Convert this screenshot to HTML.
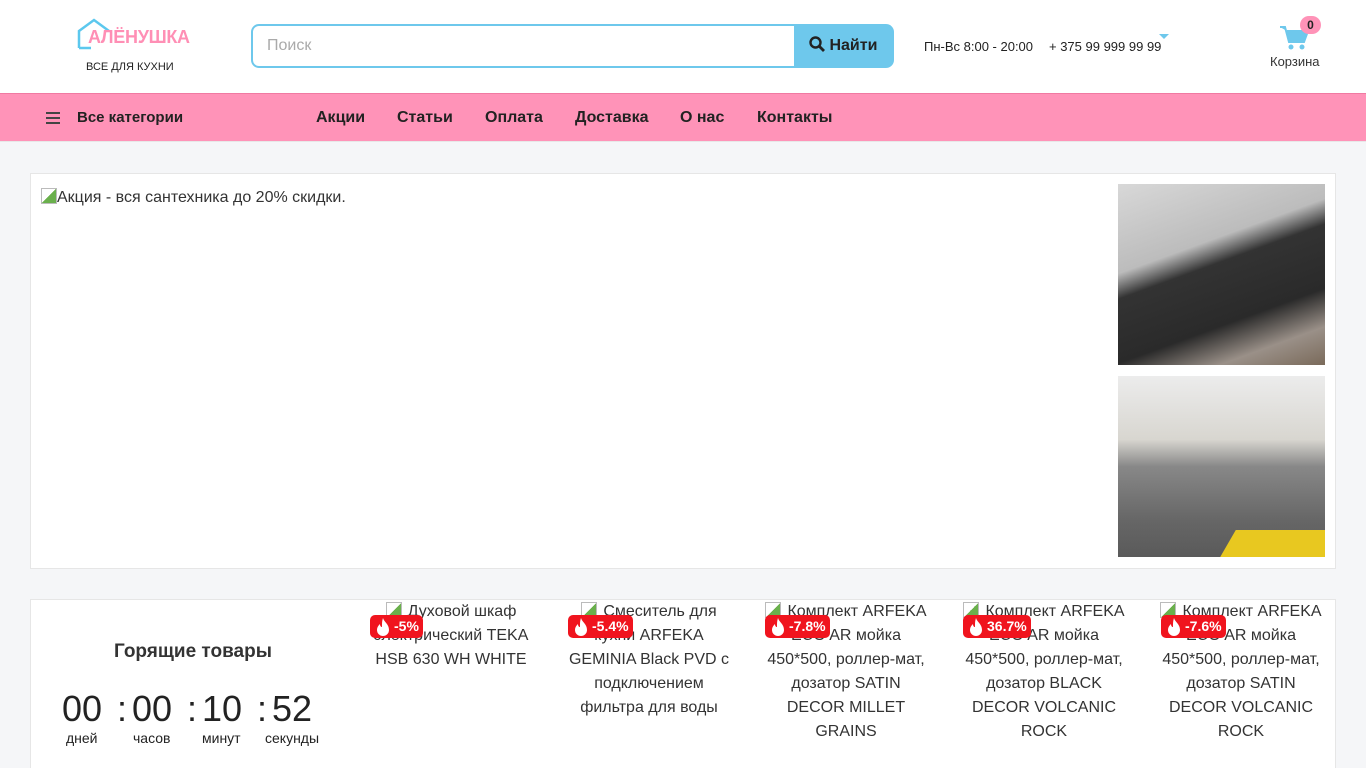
<!DOCTYPE html>
<html><head><meta charset="utf-8"><style>
*{box-sizing:border-box;margin:0;padding:0}
html,body{width:1366px;height:768px;overflow:hidden}
body{background:#f5f6f8;font-family:"Liberation Sans",sans-serif;color:#222;position:relative}
.a{position:absolute}
.hdr{left:0;top:0;width:1366px;height:93px;background:#fff}
.nav{left:0;top:93px;width:1366px;height:49px;background:#ff93b8;border-top:1px solid #f07aa2;border-bottom:1px solid #e8e8e8}
.nav span{position:absolute;top:15px;font-weight:bold;font-size:16px;color:#222}
.box{background:#fff;border:1px solid #e6e6e6}
.p{position:absolute;top:600px;width:168px;text-align:center;font-size:16px;line-height:24px;color:#333}
.p i{display:inline-block;width:16px;height:16px;margin-right:6px;vertical-align:-2px;border:1px solid #bbb;background:linear-gradient(135deg,#fff 50%,#6ab04c 50%)}
.b{position:absolute;top:615px;height:23px;background:#f0141e;color:#fff;font-weight:bold;font-size:14px;line-height:23px;border-radius:5px;padding:0 4px 0 24px}
.b svg{position:absolute;left:4px;top:2px}
.t{position:absolute;top:688px;font-size:36px;color:#222}
.l{position:absolute;top:730px;font-size:14px;color:#222;text-align:center}
</style></head><body>
<div class="a hdr"></div>
<svg class="a" style="left:76px;top:17px" width="40" height="34"><path d="M3 31V14L18 3l15 11" fill="none" stroke="#5cc8ee" stroke-width="2.5"/><path d="M3 31h12" stroke="#5cc8ee" stroke-width="2.5"/></svg>
<div class="a" style="left:88px;top:27px;font-size:18px;font-weight:bold;color:#ff8fb5;letter-spacing:-0.3px">АЛЁНУШКА</div>
<div class="a" style="left:86px;top:61px;font-size:11px;color:#222">ВСЕ ДЛЯ КУХНИ</div>
<div class="a" style="left:251px;top:24px;width:545px;height:44px;border:2px solid #6ec8ec;border-radius:8px 0 0 8px;background:#fff"></div>
<div class="a" style="left:267px;top:37px;font-size:16px;color:#aaa">Поиск</div>
<div class="a" style="left:794px;top:24px;width:100px;height:44px;background:#6ec8ec;border-radius:0 8px 8px 0;color:#222;font-weight:bold;font-size:16px;line-height:44px;padding-left:15px">
<svg width="16" height="16" style="vertical-align:-2px"><circle cx="6.5" cy="6.5" r="5" fill="none" stroke="#222" stroke-width="2.4"/><path d="M10 10l5 5" stroke="#222" stroke-width="2.8"/></svg> Найти</div>
<div class="a" style="left:924px;top:39px;font-size:13px">Пн-Вс 8:00 - 20:00</div>
<div class="a" style="left:1049px;top:39px;font-size:13px">+ 375 99 999 99 99</div>
<div class="a" style="left:1159px;top:34px;border:5px solid transparent;border-top-color:#6ec8ec"></div>
<svg class="a" style="left:1280px;top:25px" width="30" height="26"><path d="M0 2h5l4 15h15l4-11H7" fill="#6ec8ec" stroke="#6ec8ec" stroke-width="2"/><circle cx="11" cy="22" r="2.5" fill="#6ec8ec"/><circle cx="22" cy="22" r="2.5" fill="#6ec8ec"/></svg>
<div class="a" style="left:1300px;top:16px;width:21px;height:18px;border-radius:9px;background:#ff93b8;font-size:12px;font-weight:bold;text-align:center;line-height:18px">0</div>
<div class="a" style="left:1270px;top:54px;font-size:13px;color:#333">Корзина</div>
<div class="a nav">
<svg style="position:absolute;left:46px;top:18px" width="14" height="12"><path d="M0 1h14M0 6h14M0 11h14" stroke="#444" stroke-width="2"/></svg>
<span style="left:77px;font-size:15px">Все категории</span>
<span style="left:316px">Акции</span><span style="left:397px">Статьи</span><span style="left:485px">Оплата</span><span style="left:575px">Доставка</span><span style="left:680px">О нас</span><span style="left:757px">Контакты</span>
</div>
<div class="a box" style="left:30px;top:173px;width:1306px;height:396px"></div>
<div class="a" style="left:41px;top:188px;font-size:16px;color:#333"><span style="display:inline-block;width:16px;height:16px;border:1px solid #bbb;background:linear-gradient(135deg,#fff 50%,#6ab04c 50%);vertical-align:-2px"></span>Акция - вся сантехника до 20% скидки.</div>
<div class="a" style="left:1118px;top:184px;width:207px;height:181px;background:linear-gradient(160deg,#d8d8d8 0%,#bcbcbc 35%,#333 45%,#2a2a2a 70%,#9a9088 85%,#7a6a5a 100%)"></div>
<div class="a" style="left:1118px;top:376px;width:207px;height:181px;overflow:hidden;background:linear-gradient(180deg,#ececec 0%,#d8d6d0 35%,#888 50%,#666 80%,#5a5a5a 100%)"><div style="position:absolute;left:110px;top:154px;width:120px;height:27px;background:#e8c820;transform:skewX(-30deg)"></div></div>
<div class="a box" style="left:30px;top:599px;width:1306px;height:180px"></div>
<div class="a" style="left:114px;top:641px;font-size:19px;font-weight:bold;color:#333">Горящие товары</div>
<div class="t" style="left:62px">00</div><div class="t" style="left:117px">:</div><div class="t" style="left:132px">00</div><div class="t" style="left:187px">:</div><div class="t" style="left:202px">10</div><div class="t" style="left:257px">:</div><div class="t" style="left:272px">52</div>
<div class="l" style="left:66px">дней</div><div class="l" style="left:133px">часов</div><div class="l" style="left:202px">минут</div><div class="l" style="left:265px">секунды</div>
<div class="p" style="left:367px"><i></i>Духовой шкаф электрический TEKA HSB 630 WH WHITE</div>
<div class="p" style="left:565px"><i></i>Смеситель для кухни ARFEKA GEMINIA Black PVD с подключением фильтра для воды</div>
<div class="p" style="left:762px"><i></i>Комплект ARFEKA ECO AR мойка 450*500, роллер-мат, дозатор SATIN DECOR MILLET GRAINS</div>
<div class="p" style="left:960px"><i></i>Комплект ARFEKA ECO AR мойка 450*500, роллер-мат, дозатор BLACK DECOR VOLCANIC ROCK</div>
<div class="p" style="left:1157px"><i></i>Комплект ARFEKA ECO AR мойка 450*500, роллер-мат, дозатор SATIN DECOR VOLCANIC ROCK</div>
<div class="b" style="left:370px"><svg width="18" height="19"><path d="M9 1c1 4 6 6 6 12a6 6 0 0 1-12 0c0-3 2-5 3-6 0 2 1 3 2 3 0-4 0-6 1-9z" fill="#fff"/></svg>-5%</div>
<div class="b" style="left:568px"><svg width="18" height="19"><path d="M9 1c1 4 6 6 6 12a6 6 0 0 1-12 0c0-3 2-5 3-6 0 2 1 3 2 3 0-4 0-6 1-9z" fill="#fff"/></svg>-5.4%</div>
<div class="b" style="left:765px"><svg width="18" height="19"><path d="M9 1c1 4 6 6 6 12a6 6 0 0 1-12 0c0-3 2-5 3-6 0 2 1 3 2 3 0-4 0-6 1-9z" fill="#fff"/></svg>-7.8%</div>
<div class="b" style="left:963px"><svg width="18" height="19"><path d="M9 1c1 4 6 6 6 12a6 6 0 0 1-12 0c0-3 2-5 3-6 0 2 1 3 2 3 0-4 0-6 1-9z" fill="#fff"/></svg>36.7%</div>
<div class="b" style="left:1161px"><svg width="18" height="19"><path d="M9 1c1 4 6 6 6 12a6 6 0 0 1-12 0c0-3 2-5 3-6 0 2 1 3 2 3 0-4 0-6 1-9z" fill="#fff"/></svg>-7.6%</div>
</body></html>
